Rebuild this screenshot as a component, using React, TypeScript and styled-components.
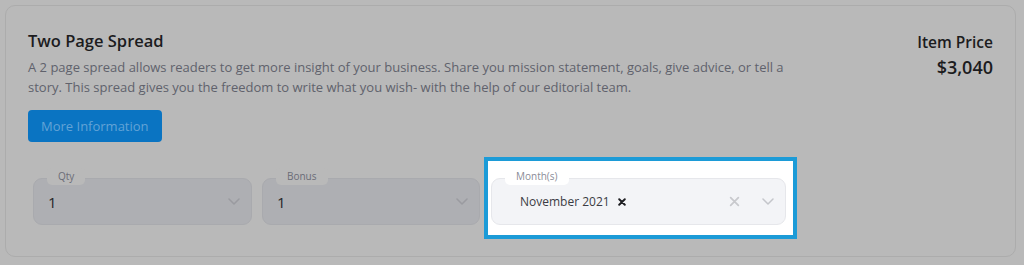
import React from "react";
import styled, { createGlobalStyle } from "styled-components";

const GlobalStyle = createGlobalStyle`
  html, body { margin: 0; padding: 0; background: #b9b9b9; }
  body {
    padding: 5px 8px 8px 5px;
    font-family: "Open Sans", "Noto Sans", sans-serif;
    -webkit-font-smoothing: antialiased;
  }
  * { box-sizing: border-box; }
`;

const Card = styled.div`
  border: 1px solid #acacac;
  border-radius: 10px;
  padding: 23px 22px 17px 22px;
  height: 252px;
`;

const Top = styled.div`
  display: flex;
  justify-content: space-between;
  align-items: flex-start;
`;

const Info = styled.div`
  display: flex;
  flex-direction: column;
  align-items: flex-start;
`;

const Title = styled.h2`
  margin: 0;
  font-size: 16.5px;
  line-height: 24px;
  font-weight: 600;
  color: #1c1c1e;
`;

const Desc = styled.p`
  margin: 5px 0 0 0;
  max-width: 770px;
  font-size: 13px;
  line-height: 19.5px;
  color: #60626c;
`;

const Button = styled.button`
  margin-top: 13px;
  height: 32px;
  padding: 0 13px;
  border: none;
  border-radius: 4px;
  background: #0a74c2;
  color: #62a3d6;
  font-family: inherit;
  font-size: 13px;
  cursor: pointer;
`;

const Price = styled.div`
  padding-top: 2px;
  text-align: right;
  color: #1c1c1e;
`;

const PriceLabel = styled.div`
  font-size: 15.5px;
  line-height: 22px;
  font-weight: 600;
`;

const PriceValue = styled.div`
  margin-top: 2px;
  font-size: 18px;
  line-height: 24px;
  font-weight: 600;
`;

const Fields = styled.div`
  display: flex;
  align-items: flex-start;
  margin-top: 15px;
  padding-left: 5px;
`;

const Field = styled.div<{ $w: number; $lit?: boolean; $gap?: number }>`
  position: relative;
  width: ${(p) => p.$w}px;
  height: 47px;
  margin-left: ${(p) => p.$gap ?? 0}px;
  margin-top: ${(p) => (p.$lit ? 0 : 21)}px;
  display: flex;
  align-items: center;
  padding: 0 11px 0 ${(p) => (p.$lit ? 28 : 14)}px;
  border-radius: 9px;
  border: 1px solid ${(p) => (p.$lit ? "#e6e7eb" : "#a9aaae")};
  background: ${(p) => (p.$lit ? "#f3f4f7" : "#aeafb3")};
`;

const Tab = styled.span<{ $lit?: boolean }>`
  position: absolute;
  top: -11px;
  left: 13px;
  height: 17px;
  padding: 0 11px;
  border-radius: 5px;
  font-size: 10px;
  line-height: 17px;
  color: ${(p) => (p.$lit ? "#8a8c97" : "#6a6c77")};
  background: ${(p) => (p.$lit ? "#ffffff" : "#b9b9b9")};
`;

const Value = styled.span<{ $lit?: boolean }>`
  flex: 1;
  display: flex;
  align-items: center;
  font-size: ${(p) => (p.$lit ? 12 : 15)}px;
  color: ${(p) => (p.$lit ? "#3b3c44" : "#262628")};
`;

const Chip = styled.span`
  display: inline-flex;
  align-items: center;
  gap: 8px;
`;

const Icon = styled.span<{ $ml?: number }>`
  display: inline-flex;
  align-items: center;
  justify-content: center;
  margin-left: ${(p) => p.$ml ?? 0}px;
`;

const Spotlight = styled.div`
  margin-left: 4px;
  border: 4px solid #1c9bd7;
  background: #ffffff;
  padding: 17px 7px 10px 3px;
`;

const Chevron = ({ color }: { color: string }) => (
  <svg width="12" height="7" viewBox="0 0 12 7">
    <path d="M1 1l5 5 5-5" fill="none" stroke={color} strokeWidth="1.5" strokeLinecap="round" strokeLinejoin="round" />
  </svg>
);

const Cross = ({ size, color, w }: { size: number; color: string; w: number }) => (
  <svg width={size} height={size} viewBox="0 0 10 10">
    <path d="M1.5 1.5l7 7M8.5 1.5l-7 7" fill="none" stroke={color} strokeWidth={w} strokeLinecap="round" />
  </svg>
);

export default function App() {
  return (
    <>
      <GlobalStyle />
      <Card>
        <Top>
          <Info>
            <Title>Two Page Spread</Title>
            <Desc>
              A 2 page spread allows readers to get more insight of your business. Share you mission statement, goals, give advice, or tell a story. This spread gives you the freedom to write what you wish- with the help of our editorial team.
            </Desc>
            <Button>More Information</Button>
          </Info>
          <Price>
            <PriceLabel>Item Price</PriceLabel>
            <PriceValue>$3,040</PriceValue>
          </Price>
        </Top>
        <Fields>
          <Field $w={219}>
            <Tab>Qty</Tab>
            <Value>1</Value>
            <Chevron color="#9a9ba0" />
          </Field>
          <Field $w={218} $gap={10}>
            <Tab>Bonus</Tab>
            <Value>1</Value>
            <Chevron color="#9a9ba0" />
          </Field>
          <Spotlight>
            <Field $w={295} $lit>
              <Tab $lit>Month(s)</Tab>
              <Value $lit>
                <Chip>
                  November 2021
                  <Cross size={8} color="#1e1e22" w={2.4} />
                </Chip>
              </Value>
              <Icon>
                <Cross size={11} color="#c8c9cd" w={1.6} />
              </Icon>
              <Icon $ml={22}>
                <Chevron color="#c4c6cb" />
              </Icon>
            </Field>
          </Spotlight>
        </Fields>
      </Card>
    </>
  );
}
